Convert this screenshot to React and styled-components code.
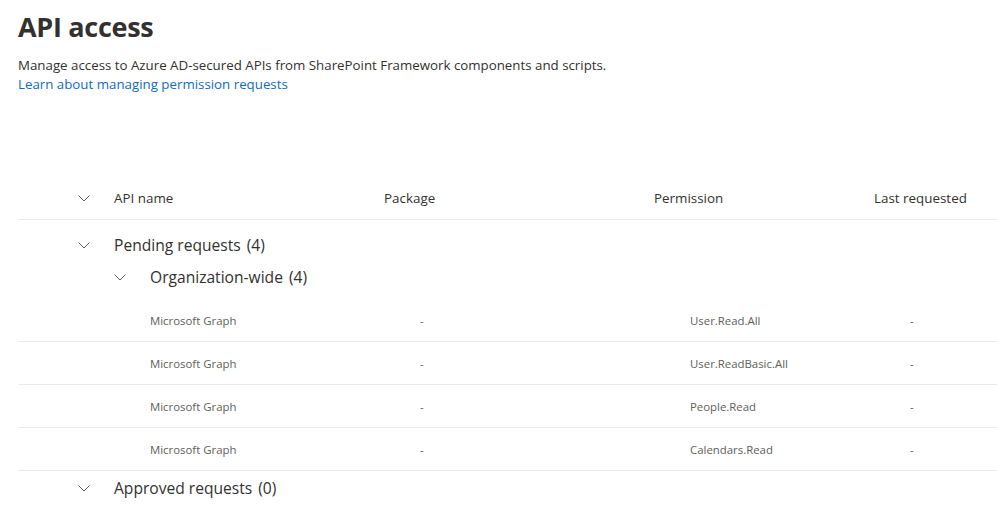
import React from "react"
import styled, { createGlobalStyle } from "styled-components"

const GlobalStyle = createGlobalStyle`
  html, body {
    margin: 0;
    padding: 0;
    background: #ffffff;
  }
  body {
    font-family: "Segoe UI", "Open Sans", "Noto Sans", sans-serif;
    color: #323130;
    -webkit-font-smoothing: antialiased;
  }
`

const Page = styled.div`
  padding: 0 0 0 18px;
`
const Title = styled.h1`
  margin: 0;
  padding-top: 8px;
  font-size: 27px;
  line-height: 38px;
  font-weight: 700;
  letter-spacing: -0.3px;
  color: #323130;
`
const Description = styled.p`
  margin: 10px 0 0;
  font-size: 13.3px;
  line-height: 19px;
  color: #323130;
`
const Link = styled.a`
  display: block;
  width: max-content;
  font-size: 13.3px;
  line-height: 19px;
  color: #0f6cbd;
  text-decoration: none;
`
const Table = styled.div`
  margin-top: 83px;
`
const HeaderRow = styled.div`
  display: flex;
  align-items: center;
  height: 42px;
  padding-left: 60px;
  border-bottom: 1px solid #edebe9;
  font-size: 13.4px;
  color: #323130;
`
const ChevronBox = styled.div`
  flex: 0 0 36px;
  display: flex;
  align-items: center;
`
const HeaderCell = styled.div`
  flex: 0 0 ${p => p.$w ? `${p.$w}px` : "auto"};
`
const GroupRow = styled.div`
  display: flex;
  align-items: center;
  height: ${p => p.$h}px;
  margin-top: ${p => p.$top || 0}px;
  padding-left: ${p => 60 + (p.$level || 0) * 36}px;
`
const GroupTitle = styled.span`
  font-size: 15.6px;
  font-weight: 500;
  color: #323130;
`
const Count = styled.span`
  margin-left: 6px;
  font-size: 15.6px;
  font-weight: 400;
  color: #323130;
`
const Rows = styled.div`
  margin-top: 6px;
`
const DataRow = styled.div`
  display: flex;
  align-items: center;
  height: 42px;
  padding-left: 132px;
  border-bottom: 1px solid #edebe9;
  font-size: 11.4px;
  color: #605e5c;
`
const DataCell = styled.div`
  flex: 0 0 ${p => p.$w ? `${p.$w}px` : "auto"};
  white-space: nowrap;
`

const Chevron = () => (
  <svg width="12" height="7" viewBox="0 0 12 7" fill="none">
    <path d="M0.5 0.5 L6 6 L11.5 0.5" stroke="#605e5c" strokeWidth="1" />
  </svg>
)

const requests = [
  { api: "Microsoft Graph", pkg: "-", permission: "User.Read.All", last: "-" },
  { api: "Microsoft Graph", pkg: "-", permission: "User.ReadBasic.All", last: "-" },
  { api: "Microsoft Graph", pkg: "-", permission: "People.Read", last: "-" },
  { api: "Microsoft Graph", pkg: "-", permission: "Calendars.Read", last: "-" },
]

const App = () => (
  <Page>
    <GlobalStyle />
    <Title>API access</Title>
    <Description>
      Manage access to Azure AD-secured APIs from SharePoint Framework components and scripts.
    </Description>
    <Link href="#">Learn about managing permission requests</Link>
    <Table>
      <HeaderRow>
        <ChevronBox><Chevron /></ChevronBox>
        <HeaderCell $w={270}>API name</HeaderCell>
        <HeaderCell $w={270}>Package</HeaderCell>
        <HeaderCell $w={220}>Permission</HeaderCell>
        <HeaderCell>Last requested</HeaderCell>
      </HeaderRow>
      <GroupRow $h={32} $top={9}>
        <ChevronBox><Chevron /></ChevronBox>
        <GroupTitle>Pending requests</GroupTitle>
        <Count>(4)</Count>
      </GroupRow>
      <GroupRow $h={32} $level={1}>
        <ChevronBox><Chevron /></ChevronBox>
        <GroupTitle>Organization-wide</GroupTitle>
        <Count>(4)</Count>
      </GroupRow>
      <Rows>
        {requests.map((r, i) => (
          <DataRow key={i}>
            <DataCell $w={270}>{r.api}</DataCell>
            <DataCell $w={270}>{r.pkg}</DataCell>
            <DataCell $w={220}>{r.permission}</DataCell>
            <DataCell>{r.last}</DataCell>
          </DataRow>
        ))}
      </Rows>
      <GroupRow $h={34}>
        <ChevronBox><Chevron /></ChevronBox>
        <GroupTitle>Approved requests</GroupTitle>
        <Count>(0)</Count>
      </GroupRow>
    </Table>
  </Page>
)

export default App
